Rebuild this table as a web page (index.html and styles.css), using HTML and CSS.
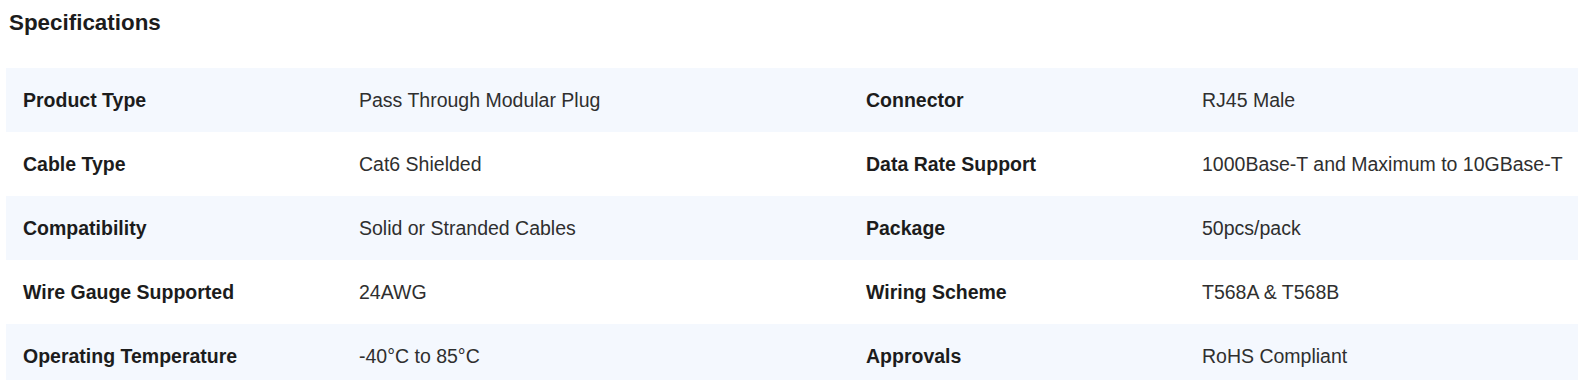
FILE: index.html
```html
<!DOCTYPE html>
<html lang="en">
<head>
<meta charset="utf-8">
<title>Specifications</title>
<link rel="stylesheet" href="styles.css">
</head>
<body>
<section class="specs">
  <h2 class="specs-title">Specifications</h2>
  <div class="spec-table">
    <div class="spec-row">
      <div class="spec-label">Product Type</div>
      <div class="spec-value">Pass Through Modular Plug</div>
      <div class="spec-label">Connector</div>
      <div class="spec-value">RJ45 Male</div>
    </div>
    <div class="spec-row">
      <div class="spec-label">Cable Type</div>
      <div class="spec-value">Cat6 Shielded</div>
      <div class="spec-label">Data Rate Support</div>
      <div class="spec-value">1000Base-T and Maximum to 10GBase-T</div>
    </div>
    <div class="spec-row">
      <div class="spec-label">Compatibility</div>
      <div class="spec-value">Solid or Stranded Cables</div>
      <div class="spec-label">Package</div>
      <div class="spec-value">50pcs/pack</div>
    </div>
    <div class="spec-row">
      <div class="spec-label">Wire Gauge Supported</div>
      <div class="spec-value">24AWG</div>
      <div class="spec-label">Wiring Scheme</div>
      <div class="spec-value">T568A &amp; T568B</div>
    </div>
    <div class="spec-row spec-row-last">
      <div class="spec-label">Operating Temperature</div>
      <div class="spec-value">-40°C to 85°C</div>
      <div class="spec-label">Approvals</div>
      <div class="spec-value">RoHS Compliant</div>
    </div>
  </div>
</section>
</body>
</html>
```

FILE: styles.css
```css
html, body {
  margin: 0;
  padding: 0;
  background: #ffffff;
}

body {
  font-family: "Liberation Sans", Arial, sans-serif;
  color: #333333;
  overflow: hidden;
}

.specs {
  padding: 10px 0 0 6px;
}

.specs-title {
  margin: 0 0 32px 0;
  padding-left: 3px;
  font-size: 22.4px;
  line-height: 26px;
  font-weight: 700;
  color: #1c1c1c;
}

.spec-table {
  display: flex;
  flex-direction: column;
}

.spec-row {
  display: grid;
  grid-template-columns: 336px 507px 336px 1fr;
  font-size: 19.5px;
  line-height: 24px;
}

.spec-row:nth-child(odd) {
  background: #f4f8fe;
}

.spec-row-last {
  height: 56px;
}

.spec-label,
.spec-value {
  padding: 20px 17px;
  white-space: nowrap;
}

.spec-label {
  font-weight: 700;
  color: #1c1c1c;
}

.spec-value {
  color: #2f2f2f;
}
```
